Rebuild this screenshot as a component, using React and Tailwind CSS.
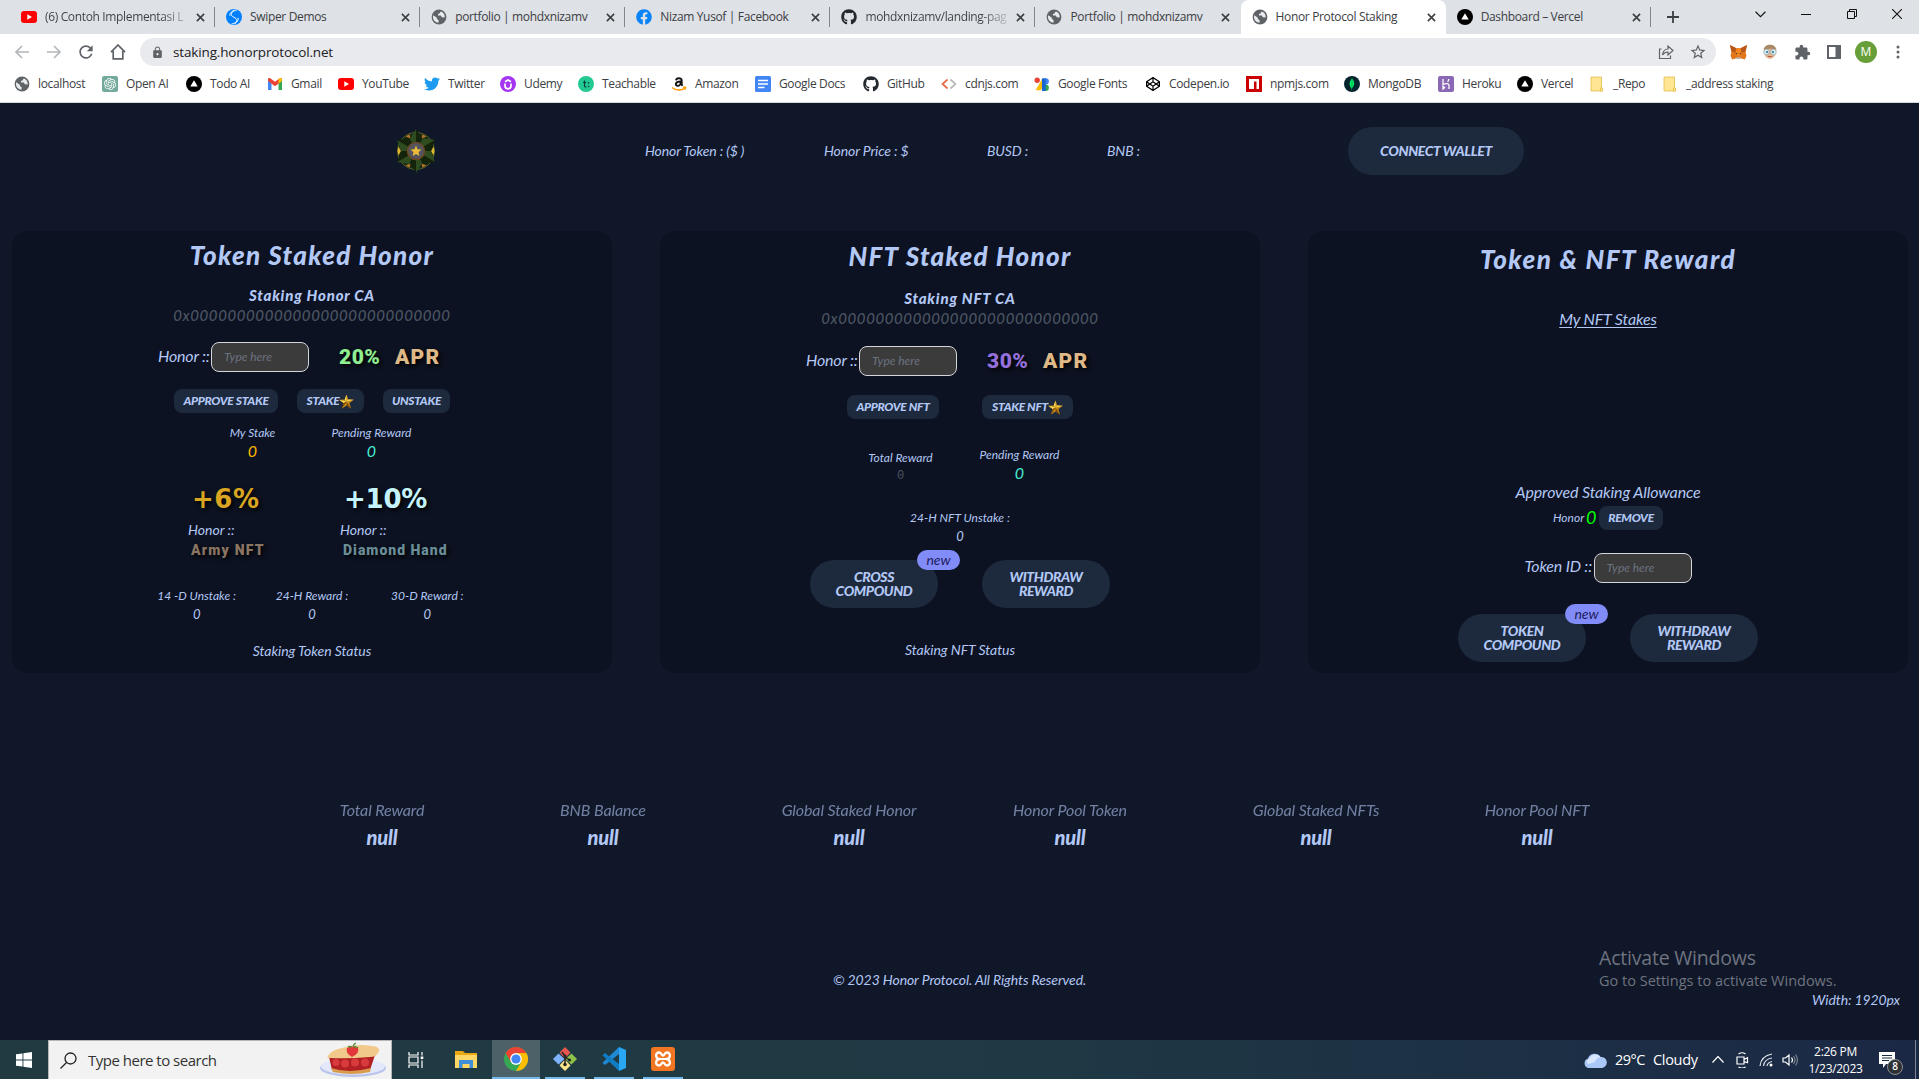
import React from "react";
import { FaFacebook, FaGithub, FaTwitter, FaCodepen } from "react-icons/fa";
import { SiOpenai } from "react-icons/si";
import { MdRefresh, MdLock, MdExtension, MdStarBorder } from "react-icons/md";

const S = ({ children, box = "0 0 16 16", className = "size-4" }) => (
  <svg viewBox={box} className={`shrink-0 ${className}`} fill="none" aria-hidden="true">{children}</svg>
);

/* ---------- site icons ---------- */
const YouTube = () => (
  <S><rect x="0" y="2" width="16" height="12" rx="3" fill="#ff0000" /><path d="M6.3 5.3v5.4L11 8z" fill="#fff" /></S>
);
const Globe = () => (
  <S>
    <circle cx="8" cy="8" r="7.4" fill="#5f6368" />
    <path d="M2.2 6.2 5.6 8.4 6 10l1.6 1.2v2.4C4.4 13.6 2 11 2 8c0-.6 0-1.200.2-1.800ZM10 2.500c-1 .5-1.200 1-1.100 1.700L7 5v1.600h2.800l1 1.600 2.900.4c.3-2.700-1.200-5.200-3.700-6.100Z" fill="#e8eaed" />
  </S>
);
const Vercel = () => (
  <S><circle cx="8" cy="8" r="8" fill="#000" /><path d="M8 4.200 11.700 10.600H4.300z" fill="#fff" /></S>
);
const OpenAI = () => (
  <span className="flex size-4 shrink-0 items-center justify-center rounded-[2px] bg-[#74aa9c]"><SiOpenai className="size-3 text-white" /></span>
);
const Gmail = () => (
  <S>
    <path d="M1 14V3.500L4.500 6v8z" fill="#4285f4" /><path d="M15 14V3.500L11.500 6v8z" fill="#34a853" />
    <path d="M1 3.500C1 2 2.600 1.800 3.600 2.500L8 5.800l4.400-3.300C13.400 1.800 15 2 15 3.500V5L8 10.200 1 5z" fill="#ea4335" />
    <path d="M11.500 3.200 12.400 2.500C13.400 1.800 15 2 15 3.500V5.100l-3.500 2.600z" fill="#fbbc04" />
  </S>
);
const Udemy = () => (
  <S><circle cx="8" cy="8" r="8" fill="#a435f0" /><path d="M5 7.500v2.300a3 3 0 0 0 6 0V7.500M5 5.700 8 4l3 1.700" stroke="#fff" strokeWidth="1.700" /></S>
);
const Teachable = () => (
  <S><circle cx="8" cy="8" r="8" fill="#22c993" /><path d="M6.500 4.500v5.300q0 1.400 1.900 1.200M5 6.500h3.200" stroke="#0f3b3a" strokeWidth="1.200" /><circle cx="10.500" cy="7" r=".8" fill="#0f3b3a" /><circle cx="10.500" cy="10.500" r=".8" fill="#0f3b3a" /></S>
);
const Amazon = () => (
  <S>
    <path d="M5 4.300c.3-2.600 5.700-3 5.700.3v3.300c0 1 .3 1.300.8 1.900M10 5.500C3.600 5.300 4.100 9.800 6.600 9.900c1.700 0 3.200-1.500 3.200-3.500" stroke="#111" strokeWidth="1.900" />
    <path d="M1 11.500c4 3.300 9.500 3.200 13 .6M12 11.300l2.600.2-.8 2.300" stroke="#ff9900" strokeWidth="1.400" />
  </S>
);
const Docs = () => (
  <S><rect width="16" height="16" rx="1.500" fill="#4285f4" /><path d="M3 4.500h10M3 8h10M3 11.500h6.500" stroke="#fff" strokeWidth="1.500" /></S>
);
const Cdnjs = () => (
  <S><path d="M6.500 3.500 1.500 8l5 4.500" stroke="#e56b4b" strokeWidth="1.700" /><path d="m9.500 3.500 5 4.500-5 4.500" stroke="#b9b9b9" strokeWidth="1.700" /></S>
);
const GFonts = () => (
  <S className="size-[17px]"><path d="M8 2 1.500 13.500h5L10 6.500z" fill="#fbbc04" /><circle cx="3" cy="4" r="2.500" fill="#ea4335" /><path d="M8 2h3.500v12H7.500V3z" fill="#1967d2" /><path d="M11 2a3 3 0 0 1 0 6z" fill="#4285f4" /><path d="M11 8a3 3 0 0 1 0 6z" fill="#34a853" /></S>
);
const Npm = () => (
  <S><rect width="16" height="16" fill="#cb0000" /><path d="M3 3h10v10h-2.500V5.500H8V13H3z" fill="#fff" /></S>
);
const Mongo = () => (
  <S><circle cx="8" cy="8" r="8" fill="#04252f" /><path d="M8 2.500c3 3 3 7-.1 9.800V14h-.4v-1.700C4.800 9.500 5 5.500 8 2.500Z" fill="#00ed64" /><path d="M8 2.500v10" stroke="#00a34a" strokeWidth=".7" /></S>
);
const Heroku = () => (
  <S><rect width="16" height="16" rx="2" fill="#8a68b4" /><path d="M5 3v5.500c3-1.300 6-1.300 6 .8V13M5 10.300v2.700l1.600-1.300zM10.800 3c0 1.200-.5 2-1.200 2.700" stroke="#fff" strokeWidth="1.300" /></S>
);
const Folder = () => (
  <S><path d="M2 1h10.500v11.500h1V15H2z" fill="#ffe594" stroke="#e3bd45" strokeWidth=".8" /><path d="M11.500 12h2v3h-2z" fill="#fff0a8" stroke="#e3bd45" strokeWidth=".8" /></S>
);
const Swiper = () => (
  <S><circle cx="8" cy="8" r="8" fill="#0080ff" /><path d="M11 .9C7 1.800 4.500 4 5.500 6.300c.9 2 4.500 2.200 5.200 4.200C11.300 12.500 9 14.500 5.500 15M8.500 1C4.500 3 3.500 5 4 6.800m8 2c.8 2-1 4.500-3.500 6.200" stroke="#fff" strokeWidth="1" /></S>
);
const Fb = () => <FaFacebook className="size-4 shrink-0 text-[#0a84f8]" />;
const Gh = () => <FaGithub className="size-4 shrink-0 text-[#24292f]" />;
const Tw = () => <FaTwitter className="size-4 shrink-0 text-[#1d9bf0]" />;
const Cp = () => <FaCodepen className="size-[14px] shrink-0 text-black" />;

/* ---------- browser chrome ---------- */
const TABS = [
  { icon: YouTube, title: "(6) Contoh Implementasi L", fade: true },
  { icon: Swiper, title: "Swiper Demos" },
  { icon: Globe, title: "portfolio | mohdxnizamv" },
  { icon: Fb, title: "Nizam Yusof | Facebook" },
  { icon: Gh, title: "mohdxnizamv/landing-pag", fade: true },
  { icon: Globe, title: "Portfolio | mohdxnizamv", last: true },
  { icon: Globe, title: "Honor Protocol Staking", active: true },
  { icon: Vercel, title: "Dashboard – Vercel" },
];

const BOOKMARKS = [
  [Globe, "localhost", "w-12"],
  [OpenAI, "Open AI", "w-11"],
  [Vercel, "Todo AI", "w-[41px]"],
  [Gmail, "Gmail", "w-[31px]"],
  [YouTube, "YouTube", "w-[46px]"],
  [Tw, "Twitter", "w-9"],
  [Udemy, "Udemy", "w-[38px]"],
  [Teachable, "Teachable", "w-[53px]"],
  [Amazon, "Amazon", "w-11"],
  [Docs, "Google Docs", "w-[68px]"],
  [Gh, "GitHub", "w-[38px]"],
  [Cdnjs, "cdnjs.com", "w-[53px]"],
  [GFonts, "Google Fonts", "w-[71px]"],
  [Cp, "Codepen.io", "w-[61px]"],
  [Npm, "npmjs.com", "w-[58px]"],
  [Mongo, "MongoDB", "w-[54px]"],
  [Heroku, "Heroku", "w-[39px]"],
  [Vercel, "Vercel", "w-8"],
  [Folder, "_Repo", "w-[33px]"],
  [Folder, "_address staking", "w-[90px]"],
];

const Tab = ({ icon: Icon, title, active, last, fade }) => (
  <div className={`relative flex h-[34px] w-[205.100px] shrink-0 items-center pl-[11px] ${active ? "rounded-t-lg bg-white" : ""}`}>
    <Icon />
    <span className={`ml-2 w-[144px] whitespace-nowrap text-[12px] tracking-[-0.35px] ${fade ? "bg-linear-to-r from-[#3c4043] from-80% to-[#c9ccd1] bg-clip-text text-transparent" : ""}`}>{title}</span>
    <S box="0 0 10 10" className="ml-[7px] size-[9px]"><path d="m1 1 8 8M9 1 1 9" stroke="#3c4043" strokeWidth="1.800" /></S>
    {!active && !last && <span className="absolute right-0 top-[7px] h-5 w-px bg-[#80868b]" />}
  </div>
);

const Chrome = () => (
  <header className="h-[103px] border-b border-[#d5d7da] bg-white font-['Open_Sans','Noto_Sans',sans-serif] text-[#3c4043]">
    <div className="flex h-[34px] bg-[#dee1e6] pl-[10px]">
      {TABS.map((t, i) => <Tab key={i} {...t} />)}
      <div className="flex w-12 shrink-0 items-center justify-center pr-1"><S box="0 0 12 12" className="size-3"><path d="M6 0v12M0 6h12" stroke="#3c4043" strokeWidth="1.800" /></S></div>
      <div className="ml-auto flex h-7 items-center">
        <span className="flex w-[46px] justify-center"><S box="0 0 10 6" className="h-[7px] w-[11px]"><path d="m.5.5 4.500 4.500L9.500.5" stroke="#111" /></S></span>
        <span className="flex w-[46px] justify-center"><span className="h-px w-[10px] bg-[#111]" /></span>
        <span className="flex w-[46px] justify-center"><S box="0 0 10 10" className="size-[10px]"><path d="M.5 2.500h7v7h-7zM2.500 2.500v-2h7v7h-2" stroke="#111" /></S></span>
        <span className="flex w-[44px] justify-center"><S box="0 0 10 10" className="size-[10px]"><path d="m0 0 10 10M10 0 0 10" stroke="#111" strokeWidth="1.100" /></S></span>
      </div>
    </div>
    <div className="flex h-9 items-center pl-[6px]">
      <span className="flex w-8 justify-center"><S><path d="M15 8H2M8 2 2 8l6 6" stroke="#b4b7ba" strokeWidth="1.700" /></S></span>
      <span className="flex w-8 justify-center"><S><path d="M1 8h13M8 2l6 6-6 6" stroke="#b4b7ba" strokeWidth="1.700" /></S></span>
      <span className="flex w-8 justify-center"><MdRefresh className="size-[20px] text-[#5f6368]" /></span>
      <span className="flex w-8 justify-center"><S><path d="M1 8.200 8 1l7 7.200M3.200 7v7.800h9.600V7" stroke="#5f6368" strokeWidth="1.700" /></S></span>
      <div className="ml-[6px] flex h-7 w-[1576px] items-center rounded-full bg-[#e9eaed] pl-[11px]">
        <MdLock className="size-[13px] text-[#5f6368]" />
        <span className="ml-[9px] text-[13.500px] tracking-[-0.15px] text-[#202124]">staking.honorprotocol.net</span>
        <span className="ml-auto flex w-8 justify-center"><S><path d="M3.500 5H1.500v9.500h11v-3M4.500 11c.5-4 2.500-6 5.500-6V2l5 4.500-5 4.500V8c-2.500 0-4 .800-5.500 3Z" stroke="#5f6368" strokeWidth="1.200" /></S></span>
        <span className="mr-[2px] flex w-8 justify-center"><MdStarBorder className="size-[18px] text-[#5f6368]" /></span>
      </div>
      <span className="ml-[6px] flex w-8 justify-center">
        <S className="size-[17px]"><path d="m0 1 6 3h4l6-3-1.300 7 .8 3-1.500 3.500-4-1h-4l-4 1L.5 11l.800-3z" fill="#e2761b" /><path d="m6 4-1 4 1.500 3h3L11 8l-1-4z" fill="#f6851b" /><path d="M0 1 6 4l-1 4-3.500-1zM16 1l-6 3 1 4 3.500-1z" fill="#b8571b" /><path d="M5 8l2 .8-.5 1zM11 8l-2 .8.500 1z" fill="#233447" /><path d="m6 12.500 2-.5 2 .5v1.500H6z" fill="#c0ad9e" /></S>
      </span>
      <span className="flex w-8 justify-center">
        <S><path d="M2 7c0-8 12-8 12 0l-1 5q-5 6-10 0z" fill="#e0b48c" /><path d="M1.500 6C2.500-1 13.500-1 14.500 6q-6-2.500-13 0Z" fill="#a98a66" /><circle cx="4.500" cy="8" r="2.800" fill="#d9eef5" stroke="#9aa9af" strokeWidth=".8" /><circle cx="11.500" cy="8" r="2.800" fill="#d9eef5" stroke="#9aa9af" strokeWidth=".8" /><circle cx="5" cy="8" r="1" fill="#1f6d86" /><circle cx="11" cy="8" r="1" fill="#1f6d86" /><path d="M6 12.500h4" stroke="#b65c4c" /></S>
      </span>
      <span className="flex w-8 justify-center"><MdExtension className="size-[17px] text-[#5f6368]" /></span>
      <span className="flex w-8 justify-center"><S box="0 0 14 14" className="size-[14px]"><path d="M1 1h12v12H1z" stroke="#5f6368" strokeWidth="2" /><path d="M8.500 1H13v12H8.500z" fill="#5f6368" /></S></span>
      <span className="flex w-8 justify-center"><span className="flex size-[22px] items-center justify-center rounded-full bg-[#689f38] text-[12px] text-white">M</span></span>
      <span className="flex w-8 justify-center"><S box="0 0 4 14" className="h-[14px] w-1"><circle cx="2" cy="2" r="1.500" fill="#5f6368" /><circle cx="2" cy="7" r="1.500" fill="#5f6368" /><circle cx="2" cy="12" r="1.500" fill="#5f6368" /></S></span>
    </div>
    <nav className="flex h-7 items-center gap-4 pl-[14px]">
      {BOOKMARKS.map(([Icon, label, w]) => (
        <a key={label} className="flex items-center gap-2">
          <span className="flex w-4 justify-center"><Icon /></span>
          <span className={`${w} whitespace-nowrap text-[12px] tracking-[-0.35px]`}>{label}</span>
        </a>
      ))}
    </nav>
  </header>
);

/* ---------- page pieces ---------- */
const HonorLogo = () => (
  <S box="0 0 40 46" className="h-[46px] w-10">
    <ellipse cx="20" cy="23" rx="18.500" ry="18.500" fill="#1b2a12" stroke="#4b5f28" />
    <g fill="#b5702a"><path d="m9.500 8.500 4-2.300 1 4.300zM30.500 8.500l-4-2.300-1 4.300zM9.500 37.500l4 2.300 1-4.300zM30.500 37.500l-4 2.300-1-4.300z" /></g>
    <path d="M1.500 23l1-4.500L5 23l-2.500 4.500zM38.500 23l-1-4.500L35 23l2.500 4.500z" fill="#e3b52f" />
    <g fill="#2f4c21"><path d="M20 1v22l-6-12zM39 12 20 23l7-13zM39 34 20 23l15 0zM20 45V23l6 12zM1 34l19-11-7 13zM1 12l19 11H5z" /></g>
    <g fill="#13240b"><path d="M20 1v22l6-12zM39 12 20 23h15zM39 34 20 23l7 13zM20 45V23l-6 12zM1 34l19-11H5zM1 12l19 11-7-13z" /></g>
    <circle cx="20" cy="23" r="8.500" fill="#53545e" stroke="#6b4824" strokeWidth="1.500" />
    <path d="m20 17.500 1.500 3.800 4 .3-3 2.600.9 3.900-3.400-2.100-3.400 2.100.9-3.900-3-2.600 4-.3z" fill="#edbd3a" />
  </S>
);

const GoldStar = () => (
  <S className="size-[15px]">
    <path d="m8 .5 1.900 5.300 5.900.2-4.700 3.500 1.600 6L8 12.200 3.300 15.500l1.600-6L.2 6l5.900-.2z" fill="#c98b16" />
    <path d="M8 .5v7.500L6.100 5.800zM8 8 .2 6l4.700 3.500zM8 8l7.800-2-5.900-.2z" fill="#f6dc5c" />
    <path d="m8 8 4.700 7.500L8 12.200zM8 8l-4.700 7.500 1.600-6z" fill="#7a4a0b" />
  </S>
);

const Script = ({ children, className }) => (
  <div className={`flex items-center justify-center whitespace-pre font-black italic ${className}`}>{children}</div>
);
const Field = () => (
  <span className="flex h-[30px] w-[98px] items-center rounded-lg border border-[#d3d6dc] bg-[#3b3b3b] pl-3 text-xs text-[#6b7280]">Type here</span>
);
const Pill = ({ children, className }) => (
  <button className={`flex h-6 items-center justify-center whitespace-nowrap rounded-lg bg-slate-800 text-xs font-black italic tracking-[-0.3px] text-[#b3c8f5] ${className}`}>{children}</button>
);
const Big = ({ lines, badge }) => (
  <button className="relative flex h-12 w-32 flex-col items-center justify-center rounded-[24px] bg-slate-800 text-sm font-black italic leading-[14px] tracking-[-0.4px] text-[#b3c8f5]">
    {lines.map((l) => <span key={l}>{l}</span>)}
    {badge && <span className="absolute -right-[22px] -top-[10px] flex h-5 w-[43px] items-center justify-center rounded-full bg-[#828cf8] font-normal tracking-normal text-[#1e1b5e]">{badge}</span>}
  </button>
);
const SHADOW = "not-italic [text-shadow:2px_2px_4px_#000]";
const STENCIL = `font-['Roboto',sans-serif] font-black ${SHADOW}`;
const WIDE = `font-['DejaVu_Sans',sans-serif] font-bold ${SHADOW}`;
const Apr = ({ value, color }) => (
  <span className={`ml-[30px] flex gap-[10px] text-[21px] leading-[30px] ${STENCIL}`}>
    <span className={`w-[46px] tracking-[0.5px] ${color}`}>{value}</span>
    <span className="tracking-[1.200px] text-[#deb887]">APR</span>
  </span>
);
const HonorInput = ({ apr, color, className }) => (
  <div className={`mx-auto flex h-[30px] w-[308px] items-center ${className}`}>
    <span className="w-[53px] whitespace-nowrap pb-[3px] text-base tracking-[-0.2px]">Honor ::</span>
    <Field />
    <Apr value={apr} color={color} />
  </div>
);
const Metric = ({ label, value, className = "", valueClass = "text-[13px] leading-4" }) => (
  <div className={`flex flex-col items-center whitespace-nowrap ${className}`}>
    <span className="text-xs leading-5">{label}</span>
    <span className={valueClass}>{value}</span>
  </div>
);
const Address = () => (
  <div className="flex h-5 items-center justify-center text-[15px] font-medium tracking-[0.600px] text-[#4b5563]">0x0000000000000000000000000000</div>
);
const Card = ({ children }) => (
  <section className="flex h-[442px] w-[600px] flex-col rounded-2xl bg-[#0c1221]">{children}</section>
);

const TokenCard = () => (
  <Card>
    <Script className="h-12 text-[26px] tracking-[1.300px]">Token Staked Honor</Script>
    <Script className="mt-[6px] h-5 text-[15px] tracking-[0.800px]">Staking Honor CA</Script>
    <Address />
    <HonorInput className="mt-[17px]" apr="20%" color="text-[#90ee90]" />
    <div className="mt-[17px] flex justify-center gap-[19px]">
      <Pill className="w-[104px]">APPROVE STAKE</Pill>
      <Pill className="w-[67px]">STAKE<GoldStar /></Pill>
      <Pill className="w-[67px]">UNSTAKE</Pill>
    </div>
    <div className="mt-[10px] flex justify-center">
      <Metric className="w-[119px]" label="My Stake" value="0" valueClass="text-base leading-[15px] text-amber-400" />
      <Metric className="w-[119px]" label="Pending Reward" value="0" valueClass="text-base leading-[15px] text-teal-300" />
    </div>
    <div className="mx-auto mt-[25px] grid w-[248px] grid-cols-[152px_96px] whitespace-nowrap">
      <span className={`pl-1 text-[26px] leading-8 tracking-[0.500px] text-[#daa520] ${WIDE}`}>+6%</span>
      <span className={`pl-1 text-[26px] leading-8 tracking-[-0.200px] text-[#c5f3fb] ${WIDE}`}>+10%</span>
      <span className="mt-[5px] text-sm">Honor ::</span>
      <span className="mt-[5px] text-sm">Honor ::</span>
      <span className={`pl-[3px] text-sm tracking-[1.200px] text-[#8a7563] ${STENCIL}`}>Army NFT</span>
      <span className={`pl-[3px] text-sm tracking-[1px] text-[#6a8d98] ${STENCIL}`}>Diamond Hand</span>
    </div>
    <div className="mx-auto mt-[26px] grid w-[346px] grid-cols-3">
      <Metric label="14 -D Unstake :" value="0" />
      <Metric label="24-H Reward :" value="0" />
      <Metric label="30-D Reward :" value="0" />
    </div>
    <div className="mt-[19px] text-center text-sm tracking-[-0.050px]">Staking Token Status</div>
  </Card>
);

const NftCard = () => (
  <Card>
    <Script className="h-[50px] text-[26px] tracking-[1.300px]">NFT Staked Honor</Script>
    <Script className="mt-[7px] h-5 text-[15px] tracking-[0.800px]">Staking NFT CA</Script>
    <Address />
    <HonorInput className="mt-[18px]" apr="30%" color="text-[#9370db]" />
    <div className="mt-[19px] flex justify-center gap-[43px]">
      <Pill className="w-[92px]">APPROVE NFT</Pill>
      <Pill className="w-[91px]">STAKE NFT<GoldStar /></Pill>
    </div>
    <div className="mt-[26px] flex justify-center">
      <Metric className="w-[119px] pt-[3px]" label="Total Reward" value="0" valueClass="font-['Liberation_Mono',monospace] text-xs leading-4 not-italic text-gray-600" />
      <Metric className="w-[119px]" label="Pending Reward" value="0" valueClass="text-base leading-[15px] text-teal-300" />
    </div>
    <Metric className="mt-6" label="24-H NFT Unstake :" value="0" />
    <div className="mt-4 flex justify-center gap-11">
      <Big lines={["CROSS", "COMPOUND"]} badge="new" />
      <Big lines={["WITHDRAW", "REWARD"]} />
    </div>
    <div className="mt-8 text-center text-sm tracking-[-0.050px]">Staking NFT Status</div>
  </Card>
);

const RewardCard = () => (
  <Card>
    <Script className="mt-1 h-12 text-[26px] tracking-[1.500px]">Token &amp; NFT Reward</Script>
    <a className="mt-6 text-center text-base tracking-[-0.140px] underline underline-offset-2">My NFT Stakes</a>
    <div className="mt-[149px] text-center text-base tracking-[-0.120px]">Approved Staking Allowance</div>
    <div className="mt-[2px] flex h-6 items-center justify-center">
      <span className="w-[33px] text-xs">Honor</span>
      <span className="w-[13px] pb-[3px] text-lg leading-6 text-[#00ff00]">0</span>
      <Pill className="w-16">REMOVE</Pill>
    </div>
    <div className="mx-auto mt-[23px] flex h-[30px] w-[167px] items-center">
      <span className="w-[69px] whitespace-nowrap pb-1 text-base tracking-[-0.200px]">Token ID ::</span>
      <Field />
    </div>
    <div className="mt-[31px] flex justify-center gap-11">
      <Big lines={["TOKEN", "COMPOUND"]} badge="new" />
      <Big lines={["WITHDRAW", "REWARD"]} />
    </div>
  </Card>
);

const PAIRS = [
  ["Total Reward", "BNB Balance"],
  ["Global Staked Honor", "Honor Pool Token"],
  ["Global Staked NFTs", "Honor Pool NFT"],
];

const Page = () => (
  <main className="flex h-[937px] flex-col overflow-hidden bg-[#101728] font-['Lato','Open_Sans',sans-serif] italic text-[#b3c8f5]">
    <div className="flex h-24 items-center pl-[396px]">
      <HonorLogo />
      <div className="ml-[209px] flex w-[630px] whitespace-nowrap text-sm tracking-[-0.120px]">
        <span className="w-[179px]">Honor Token : ($ )</span>
        <span className="w-[163px]">Honor Price : $</span>
        <span className="w-[120px]">BUSD :</span>
        <span>BNB :</span>
      </div>
      <button className="ml-[73px] h-12 w-44 rounded-[24px] bg-slate-800 text-sm font-black italic tracking-[-0.350px]">CONNECT WALLET</button>
    </div>
    <div className="mt-8 flex gap-12 pl-3">
      <TokenCard />
      <NftCard />
      <RewardCard />
    </div>
    <div className="mt-[124px] flex justify-center gap-28">
      {PAIRS.map((pair) => (
        <div key={pair[0]} className="flex gap-[87px]">
          {pair.map((label) => (
            <div key={label} className="flex w-[134px] flex-col items-center whitespace-nowrap">
              <span className="text-base leading-[26px] tracking-[-0.120px] opacity-60">{label}</span>
              <span className="text-xl font-black leading-7 tracking-[-0.200px]">null</span>
            </div>
          ))}
        </div>
      ))}
    </div>
    <div className="mt-[92px] flex h-[90px] justify-between">
      <div className="w-[500px]" />
      <p className="mt-[27px] text-sm leading-5 tracking-[-0.100px]">© 2023 Honor Protocol. All Rights Reserved.</p>
      <div className="flex w-[500px] flex-col pl-[180px] font-['Open_Sans','Noto_Sans',sans-serif] not-italic text-[#6f7480]">
        <span className="text-[19.500px] leading-[30px] tracking-[-0.200px]">Activate Windows</span>
        <span className="text-[14.500px] leading-4">Go to Settings to activate Windows.</span>
        <span className="mr-[19px] self-end font-['Lato',sans-serif] text-sm italic leading-[22px] tracking-[-0.100px] text-[#b3c8f5]">Width: 1920px</span>
      </div>
    </div>
  </main>
);

/* ---------- taskbar ---------- */
const Pie = () => (
  <S box="0 0 68 36" className="h-9 w-[68px]">
    <ellipse cx="34" cy="26" rx="33" ry="9" fill="#b9c4ec" /><ellipse cx="34" cy="24.500" rx="32" ry="8" fill="#e3e8fb" />
    <path d="M10 15 13 28q17 5 38 0l5-15z" fill="#b32024" />
    <path d="M9 14q3-6 14-8 14-5 30-2 10 1 6 7-2 4-8 4-22 2-40 1-4 0-2-2Z" fill="#f1c98a" />
    <path d="M12 26q18 6 40 0l-1 4q-18 4-37 0z" fill="#d99b4c" />
    <g fill="#d93a3d"><circle cx="17" cy="20.500" r="3.500" /><circle cx="26" cy="21.500" r="4" /><circle cx="36" cy="20.500" r="4" /><circle cx="46" cy="20.500" r="4" /></g>
    <path d="M33 15q-7-4-5-9 5-3 11 0 2 5-6 9Z" fill="#e2383b" /><path d="M34 4q1-2 3-3M33 5q-3-1-4 0M34 5q3-1 5 1" stroke="#4e8a36" strokeWidth="1.300" />
  </S>
);

const Chromium = () => (
  <S box="0 0 24 24" className="size-6">
    <circle cx="12" cy="12" r="12" fill="#34a853" />
    <path d="M12 6h10.400A12 12 0 0 1 12 24l5.200-9z" fill="#fbbc04" />
    <path d="M1.600 6A12 12 0 0 1 22.400 6H12l-5.200 9z" fill="#ea4335" />
    <circle cx="12" cy="12" r="5.900" fill="#fff" /><circle cx="12" cy="12" r="4.600" fill="#4285f4" />
  </S>
);

const Task = ({ children, active }) => (
  <div className={`flex h-full w-12 flex-col items-center ${active ? "bg-[#4d6169]" : ""}`}>
    <div className="flex flex-1 items-center">{children}</div>
    <div className={`h-0.5 bg-[#76b9ed] ${active ? "w-full" : "w-10"}`} />
  </div>
);

const Taskbar = () => (
  <footer className="flex h-[39px] items-center bg-linear-to-r from-[#213a42] via-[#1f3a44] to-[#1b2845] font-['Open_Sans','Noto_Sans',sans-serif] text-white">
    <div className="flex w-12 justify-center"><S><path d="M0 2.300 6.500 1.400v6.100H0zM7.400 1.300 16 0v7.500H7.400zM0 8.400h6.500v6.200L0 13.700zM7.400 8.400H16V16l-8.600-1.200z" fill="#fff" /></S></div>
    <div className="flex h-full w-[344px] items-center border border-b-0 border-[#b5b5b5] bg-[#f2f2f2] pl-[11px] pr-1 text-[#333]">
      <S box="0 0 17 17" className="size-[17px]"><circle cx="10.500" cy="6.500" r="5.500" stroke="#222" strokeWidth="1.300" /><path d="M6.500 10.500.5 16.500" stroke="#222" strokeWidth="1.300" /></S>
      <span className="ml-[11px] flex-1 whitespace-nowrap text-[15px] tracking-[-0.500px]">Type here to search</span>
      <Pie />
    </div>
    <div className="flex w-12 justify-center"><S><path d="M1 0v3h9V0M1 16v-3h9v3M1 5h9v6H1zM14 0v3.500M14 8.500V16" stroke="#fff" strokeWidth="1.200" /><path d="M12.700 4.500h2.600v2.600h-2.600z" fill="#fff" /></S></div>
    <div className="flex w-[52px] justify-center"><S box="0 0 22 20" className="h-5 w-[22px]"><path d="M0 1h8l2 2h12v15H0z" fill="#e8a911" /><path d="M0 5h22v13H0z" fill="#ffd767" /><path d="M4 10h14v8h-3.500v-4h-7v4H4z" fill="#3f8fd8" /></S></div>
    <Task active><Chromium /></Task>
    <div className="ml-px flex h-full gap-px">
      <Task><S box="0 0 24 24" className="size-6"><path d="m12 0 5.500 5.500-5.500 6-5.500-6z" fill="#e8574f" /><path d="m0 12 5.500-5.500 6 5.500-6 5.500z" fill="#80b3ff" /><path d="m24 12-5.500-5.500-6 5.500 6 5.500z" fill="#8dc149" /><path d="m12 24 5.500-5.500-5.500-6-5.500 6z" fill="#fde68a" /><path d="M9 5l3 4v9M12 10l4.500 3" stroke="#222" strokeWidth="1.500" /><circle cx="12" cy="17.500" r="1.800" fill="#222" /><circle cx="16.500" cy="13" r="1.600" fill="#222" /><circle cx="12" cy="9" r="1.600" fill="#222" /></S></Task>
      <Task><S box="0 0 24 24" className="size-6"><path d="M17 0 24 3v18l-7 3z" fill="#2aa7f2" /><path d="M17 0v7L3 18l-2.500-2.200z" fill="#1e8ad6" /><path d="M17 24v-7L3 6 .5 8.200z" fill="#0f7cc4" /></S></Task>
      <Task><S box="0 0 24 24" className="size-6"><rect width="24" height="24" rx="3" fill="#f37623" /><path d="M9 12C4 12 4 5.500 8 5.500c2.500 0 2.500 3 4 3s1.500-3 4-3c4 0 4 6.500-1 6.500 5 0 5 6.500 1 6.500-2.500 0-2.500-3-4-3s-1.500 3-4 3c-4 0-4-6.500 1-6.500Z" stroke="#fff" strokeWidth="2.300" /><path d="M9 12h6" stroke="#fff" strokeWidth="2" /></S></Task>
    </div>
    <div className="ml-auto flex h-full items-center whitespace-nowrap">
      <S box="0 0 24 16" className="h-4 w-6"><path d="M5 16a5 5 0 0 1 0-9.500A7 7 0 0 1 17.500 5 5.500 5.500 0 0 1 19 16z" fill="#a9c8f7" /><path d="M5 12a5 4 0 0 1 1-5.500A7 7 0 0 1 17.500 5Q13 6 12 10z" fill="#d8e7fd" /></S>
      <span className="ml-2 w-[38px] text-[14.500px] tracking-[-0.500px]">29°C</span>
      <span className="w-[53px] text-[14.500px] tracking-[-0.300px]">Cloudy</span>
      <span className="flex w-6 justify-center"><S box="0 0 12 7" className="h-[7px] w-3"><path d="m.5 6.500 5.500-6 5.500 6" stroke="#fff" strokeWidth="1.200" /></S></span>
      <span className="flex w-6 justify-center"><S><path d="M3 5h7v7H3zM10 7.500l3.500-1.800v5L10 9.500M4.500 2q3.500-2.500 7 0M4.500 15q3.500 2 7 0" stroke="#fff" strokeWidth="1.200" /></S></span>
      <span className="flex w-6 justify-center"><S box="0 0 14 14" className="size-[14px]"><path d="M1 13Q2 3 13 1M4.500 13q1-7 8.500-8M8 13q.5-3.500 5-4.500" stroke="#dfe5ea" strokeWidth="1.200" /><circle cx="12" cy="12" r="1.500" fill="#fff" /></S></span>
      <span className="flex w-6 justify-center"><S box="0 0 17 14" className="h-[14px] w-[17px]"><path d="M1 5h2.500L7 2v10L3.500 9H1zM9.500 4.500q2 2.500 0 5" stroke="#fff" strokeWidth="1.200" /><path d="M11.500 3q3 4 0 8M13.500 1.500q4 5.500 0 11" stroke="#77828f" strokeWidth="1.200" /></S></span>
      <div className="flex w-[67px] flex-col items-center text-[12px] leading-[17px] tracking-[-0.300px]"><span>2:26 PM</span><span>1/23/2023</span></div>
      <div className="relative ml-[10px] w-[36px]">
        <S box="0 0 16 16" className="size-4"><path d="M0 0h16v12H7l-3 4v-4H0z" fill="#fff" /><path d="M3 3.500h10M3 6h10M3 8.500h7" stroke="#1b2a43" /></S>
        <span className="absolute left-2 top-[7px] flex size-4 items-center justify-center rounded-full border border-[#8c8f93] bg-[#2e3134] text-[10px] font-semibold">8</span>
      </div>
      <span className="mr-[3px] h-full w-px bg-[#7d8594]" />
    </div>
  </footer>
);

export default function App() {
  return (
    <div className="h-[1079px] w-[1919px] overflow-hidden">
      <Chrome />
      <Page />
      <Taskbar />
    </div>
  );
}
